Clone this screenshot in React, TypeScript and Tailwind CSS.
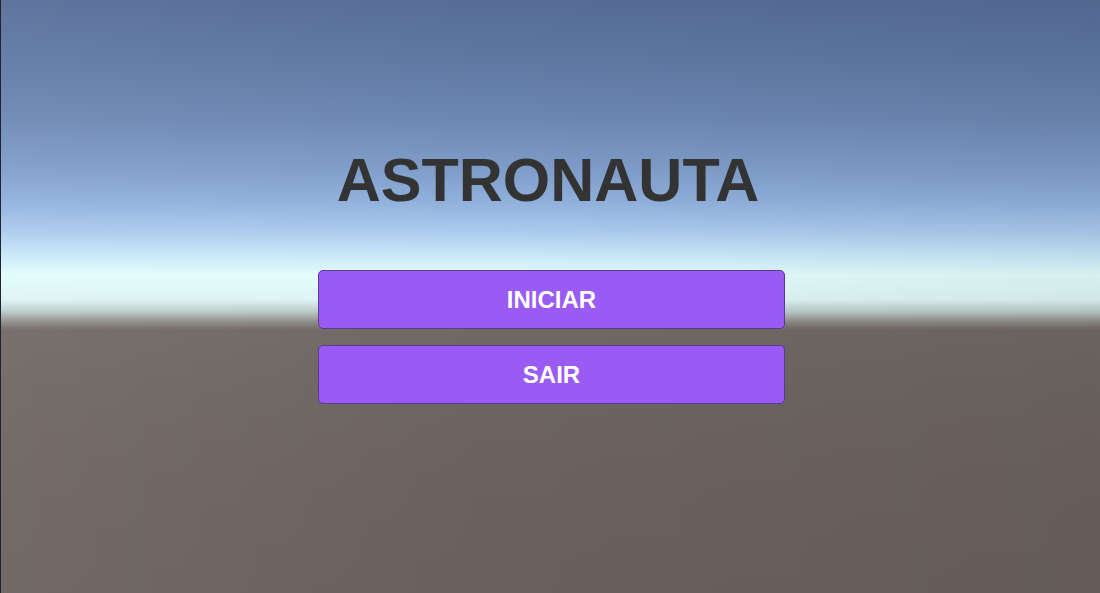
import React from "react";

export default function App() {
  return (
    <div
      className="relative h-[593px] w-full overflow-hidden border-l border-[#1d2630] bg-[linear-gradient(to_bottom,#566c96_0%,#5e78a2_10%,#6c87b3_20%,#809ecb_29%,#8eafdb_33.7%,#a9c9ec_38.8%,#c8e8f8_43%,#e2fcfc_46.4%,#dcf4f2_50.6%,#b8c8c6_52.6%,#8c8a87_54.3%,#706865_55.6%,#6d6561_65%,#6b625e_80%,#69605b_100%)]"
      style={{ fontFamily: '"Liberation Sans", Arial, sans-serif' }}
    >
      <div className="pointer-events-none absolute inset-0 bg-[linear-gradient(to_right,rgba(255,255,255,0.06),rgba(255,255,255,0)_45%,rgba(0,0,0,0.05))]" />
      <div className="relative flex flex-col items-center pt-[150px]">
        <h1 className="mr-[5px] text-[61px] font-bold leading-[61px] text-[#333333]">
          ASTRONAUTA
        </h1>
        <div className="ml-[2px] mt-[59px] flex flex-col gap-[16px]">
          <button className="flex h-[59px] w-[467px] items-center justify-center rounded-[5px] border border-[#5a3a8c] bg-[#995bf4] text-[24px] font-bold text-white">
            INICIAR
          </button>
          <button className="flex h-[59px] w-[467px] items-center justify-center rounded-[5px] border border-[#5a3a8c] bg-[#995bf4] text-[24px] font-bold text-white">
            SAIR
          </button>
        </div>
      </div>
    </div>
  );
}
